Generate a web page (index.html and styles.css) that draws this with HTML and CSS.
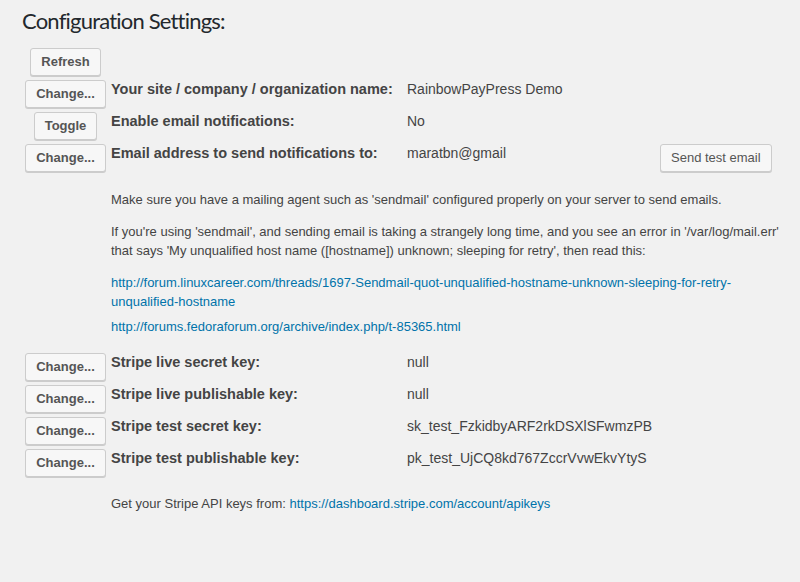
FILE: index.html
```html
<!DOCTYPE html>
<html>
<head>
<meta charset="utf-8">
<link rel="stylesheet" href="styles.css">
</head>
<body>
<div class="wrap">
  <h2 class="title">Configuration Settings:</h2>
  <table class="settings">
    <colgroup>
      <col class="c1"><col class="c2"><col class="c3"><col class="c4">
    </colgroup>
    <tr>
      <td class="act"><button class="btn btn-b">Refresh</button></td>
      <td colspan="3"></td>
    </tr>
    <tr>
      <td class="act"><button class="btn btn-b">Change...</button></td>
      <td class="label">Your site / company / organization name:</td>
      <td class="value" colspan="2">RainbowPayPress Demo</td>
    </tr>
    <tr>
      <td class="act"><button class="btn btn-b">Toggle</button></td>
      <td class="label">Enable email notifications:</td>
      <td class="value" colspan="2">No</td>
    </tr>
    <tr>
      <td class="act"><button class="btn btn-b">Change...</button></td>
      <td class="label">Email address to send notifications to:</td>
      <td class="value">maratbn@gmail</td>
      <td class="sendcell"><button class="btn">Send test email</button></td>
    </tr>
    <tr>
      <td></td>
      <td colspan="3" class="notes">
        <p class="first">Make sure you have a mailing agent such as 'sendmail' configured properly on your server to send emails.</p>
        <p>If you're using 'sendmail', and sending email is taking a strangely long time, and you see an error in '/var/log/mail.err' that says 'My unqualified host name ([hostname]) unknown; sleeping for retry', then read this:</p>
        <p class="links"><a href="#">http://forum.linuxcareer.com/threads/1697-Sendmail-quot-unqualified-hostname-unknown-sleeping-for-retry-unqualified-hostname</a><br><a class="l2" href="#">http://forums.fedoraforum.org/archive/index.php/t-85365.html</a></p>
      </td>
    </tr>
    <tr>
      <td class="act"><button class="btn btn-b">Change...</button></td>
      <td class="label">Stripe live secret key:</td>
      <td class="value" colspan="2">null</td>
    </tr>
    <tr>
      <td class="act"><button class="btn btn-b">Change...</button></td>
      <td class="label">Stripe live publishable key:</td>
      <td class="value" colspan="2">null</td>
    </tr>
    <tr>
      <td class="act"><button class="btn btn-b">Change...</button></td>
      <td class="label">Stripe test secret key:</td>
      <td class="value" colspan="2">sk_test_FzkidbyARF2rkDSXlSFwmzPB</td>
    </tr>
    <tr>
      <td class="act"><button class="btn btn-b">Change...</button></td>
      <td class="label">Stripe test publishable key:</td>
      <td class="value" colspan="2">pk_test_UjCQ8kd767ZccrVvwEkvYtyS</td>
    </tr>
    <tr>
      <td></td>
      <td colspan="3" class="notes">
        <p>Get your Stripe API keys from: <a href="#">https://dashboard.stripe.com/account/apikeys</a></p>
      </td>
    </tr>
  </table>
</div>
</body>
</html>
```

FILE: styles.css
```css
html, body {
  margin: 0;
  padding: 0;
  background: #f1f1f1;
}
body {
  font-family: "Liberation Sans", Arial, sans-serif;
  font-size: 13px;
  color: #444;
}
.wrap {
  padding: 5px 0 0 21px;
}
.title {
  margin: 0 0 8px 1px;
  font-family: Lato, sans-serif;
  font-weight: 400;
  font-size: 22px;
  letter-spacing: -0.8px;
  line-height: 32px;
  color: #23282d;
}
.settings {
  table-layout: fixed;
  width: 778px;
  border-collapse: separate;
  border-spacing: 2px;
}
.c1 { width: 85px; }
.c2 { width: 294px; }
.c3 { width: 251px; }
.c4 { width: 138px; }
.settings td {
  padding: 1px;
  vertical-align: top;
}
.act { text-align: center; }
.sendcell { text-align: left; }
.label {
  font-weight: 700;
  font-size: 14.5px;
  line-height: 19px;
  color: #444;
}
.value {
  font-size: 14px;
  line-height: 19px;
  color: #444;
}
.btn {
  display: inline-block;
  height: 28px;
  margin: 0;
  padding: 0 10px 1px;
  font-family: "Liberation Sans", Arial, sans-serif;
  font-size: 13px;
  line-height: 26px;
  color: #555;
  background: #f7f7f7;
  border: 1px solid #ccc;
  border-radius: 3px;
  box-shadow: 0 1px 0 #ccc;
  vertical-align: top;
  box-sizing: border-box;
}
.btn-b { font-weight: 700; }
.notes p {
  margin: 13px 0;
  line-height: 19px;
}
.notes p.first {
  margin-top: 14px;
}
.notes a {
  color: #0073aa;
  text-decoration: none;
}
.links .l2 {
  display: inline-block;
  margin-top: 6px;
}
```
